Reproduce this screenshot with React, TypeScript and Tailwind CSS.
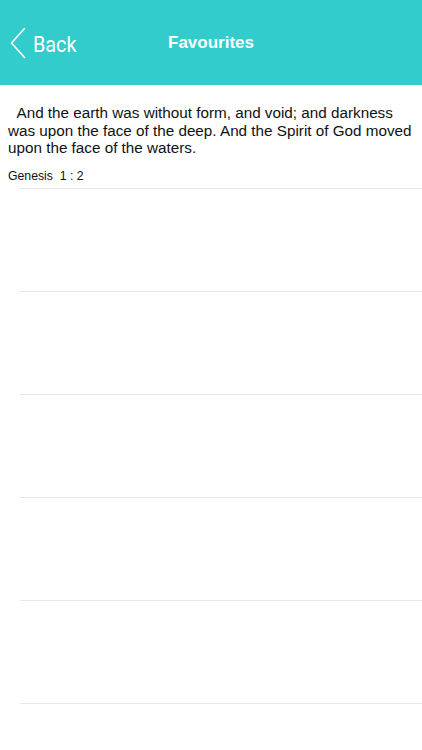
import React from "react";

export default function App() {
  const empties = [0, 1, 2, 3, 4];
  return (
    <div className="w-[422px] h-[750px] bg-white overflow-hidden" style={{ fontFamily: '"Liberation Sans", Arial, sans-serif' }}>
      <div className="h-[85px] bg-[#33cccc] grid grid-cols-[1fr_auto_1fr] items-center">
        <div className="flex items-center pl-[10px] mt-[1px]">
          <svg width="16" height="32" viewBox="0 0 16 32" className="block">
            <path d="M14.5 1.5 L1.5 16 L14.5 30.5" fill="none" stroke="white" strokeWidth="1.6" strokeLinecap="round" strokeLinejoin="round" />
          </svg>
          <span
            className="ml-[7px] mt-[4px] inline-block origin-left scale-x-[0.9] text-white text-[22px] leading-none"
            style={{ fontFamily: 'Roboto, "Liberation Sans", sans-serif' }}
          >
            Back
          </span>
        </div>
        <div className="text-white font-bold text-[17px] leading-none -mt-[1px]">Favourites</div>
        <div />
      </div>

      <div className="h-[103px] flex flex-col px-2 pt-[19px]">
        <p className="text-[15.25px] leading-[17.5px] text-[#111] whitespace-pre-wrap">
          {"  And the earth was without form, and void; and darkness was upon the face of the deep. And the Spirit of God moved upon the face of the waters."}
        </p>
        <p className="mt-[11.5px] text-[12.25px] leading-[16px] text-[#111] whitespace-pre-wrap">{"Genesis  1 : 2"}</p>
      </div>
      <div className="ml-[20px] h-px bg-[#e6e6e6]" />

      {empties.map((i) => (
        <div key={i}>
          <div className="h-[102px]" />
          <div className="ml-[20px] h-px bg-[#e6e6e6]" />
        </div>
      ))}
    </div>
  );
}
